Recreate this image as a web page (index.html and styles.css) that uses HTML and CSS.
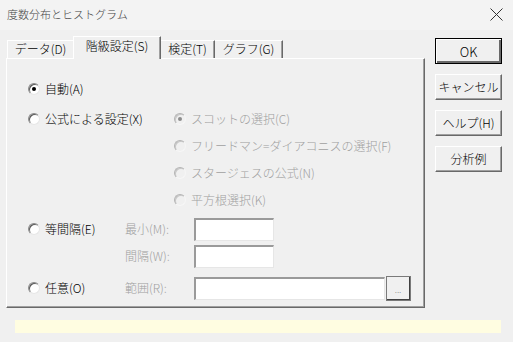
FILE: index.html
```html
<!DOCTYPE html>
<html lang="ja">
<head>
    <meta charset="UTF-8">
    <title>度数分布とヒストグラム</title>
    <link rel="stylesheet" href="styles.css">
</head>
<body>

    <div class="titlebar">
        <span class="title">度数分布とヒストグラム</span>
        <svg class="close" width="13" height="13" viewBox="0 0 13 13">
            <path d="M0.5 0.5 L12.5 12.5 M12.5 0.5 L0.5 12.5" stroke="#333" stroke-width="1" fill="none"/>
        </svg>
    </div>

    <div class="main">
        <div class="left">
            <div class="tabs">
                <div class="tab tab-data">データ(D)</div>
                <div class="tab tab-class active">階級設定(S)</div>
                <div class="tab tab-test">検定(T)</div>
                <div class="tab tab-graph">グラフ(G)</div>
            </div>

            <div class="panel">
                <div class="row">
                    <div class="opt"><span class="radio checked"></span>自動(A)</div>
                </div>

                <div class="formula">
                    <div class="opt wide"><span class="radio"></span>公式による設定(X)</div>
                    <div class="sublist">
                        <div class="subrow opt disabled"><span class="radio checked"></span>スコットの選択(C)</div>
                        <div class="subrow opt disabled"><span class="radio"></span>フリードマン=ダイアコニスの選択(F)</div>
                        <div class="subrow opt disabled"><span class="radio"></span>スタージェスの公式(N)</div>
                        <div class="subrow opt disabled"><span class="radio"></span>平方根選択(K)</div>
                    </div>
                </div>

                <div class="row row-equal">
                    <div class="opt narrow"><span class="radio"></span>等間隔(E)</div>
                    <span class="field-label">最小(M):</span>
                    <div class="textbox small"></div>
                </div>

                <div class="row row-step">
                    <div class="opt narrow"></div>
                    <span class="field-label">間隔(W):</span>
                    <div class="textbox small"></div>
                </div>

                <div class="row row-any">
                    <div class="opt narrow"><span class="radio"></span>任意(O)</div>
                    <span class="field-label">範囲(R):</span>
                    <div class="textbox range"></div>
                    <button class="dots-btn">...</button>
                </div>
            </div>
        </div>

        <div class="buttons">
            <button class="btn default">OK</button>
            <button class="btn">キャンセル</button>
            <button class="btn">ヘルプ(H)</button>
            <button class="btn">分析例</button>
        </div>
    </div>

    <div class="status"></div>

</body>
</html>
```

FILE: styles.css
```css
* {
    box-sizing: border-box;
    margin: 0;
    padding: 0;
}

body {
    width: 513px;
    height: 342px;
    overflow: hidden;
    background-color: #f0f0f0;
    color: #000;
    font-family: "Noto Sans CJK JP Light", "Noto Sans CJK JP", sans-serif;
    font-size: 12px;
}

/* title bar */
.titlebar {
    display: flex;
    align-items: center;
    justify-content: space-between;
    height: 30px;
    padding: 0 10px 2px 7px;
    background-color: #f3f3f3;
}

.title {
    font-size: 11px;
    color: #444;
    line-height: 1;
}

/* main area */
.main {
    display: flex;
    margin-top: 6px;
    padding-left: 6px;
}

.left {
    width: 419px;
}

/* tabs */
.tabs {
    display: flex;
    align-items: flex-end;
    height: 22px;
    padding-left: 1px;
    position: relative;
    z-index: 1;
}

.tab {
    display: flex;
    align-items: center;
    justify-content: center;
    height: 18px;
    padding-bottom: 1px;
    border-top: 1px solid #fff;
    border-right: 1px solid #696969;
    box-shadow: inset -1px 0 #a0a0a0;
    line-height: 1;
    white-space: nowrap;
}

.tab-data {
    width: 66px;
    border-left: 1px solid #fff;
    border-right: none;
    box-shadow: none;
}

.tab-class {
    width: 88px;
}

.tab-test {
    width: 54px;
}

.tab-graph {
    width: 68px;
}

.tab.active {
    height: 23px;
    margin-bottom: -1px;
    padding-bottom: 5px;
    border-left: 1px solid #fff;
    background-color: #f0f0f0;
}

/* panel */
.panel {
    height: 250px;
    padding: 17px 0 0 21px;
    border-top: 1px solid #fff;
    border-left: 1px solid #fff;
    border-right: 1px solid #696969;
    border-bottom: 1px solid #696969;
    box-shadow: inset -1px -1px #a0a0a0;
}

.row {
    display: flex;
    align-items: center;
    height: 26px;
}

.opt {
    display: flex;
    align-items: center;
    white-space: nowrap;
    line-height: 1;
}

.opt.disabled {
    color: #a0a0a0;
}

.opt.narrow {
    width: 97px;
    height: 26px;
}

.formula {
    display: flex;
    margin-top: 3px;
}

.opt.wide {
    width: 146px;
    height: 27px;
}

.subrow {
    height: 27px;
}

.row-equal {
    margin-top: 3px;
}

.row-step {
    margin-top: 1px;
}

.row-any {
    margin-top: 6px;
}

/* radio buttons */
.radio {
    position: relative;
    flex: none;
    width: 12px;
    height: 12px;
    margin-right: 5px;
    border-radius: 50%;
    border: 1px solid;
    border-color: #8a8a8a #e6e6e6 #e6e6e6 #8a8a8a;
    background-color: #fff;
    box-shadow: inset 1px 1px 0 #5a5a5a;
}

.disabled .radio {
    border-color: #b4b4b4 #f6f6f6 #f6f6f6 #b4b4b4;
    background-color: #f0f0f0;
    box-shadow: inset 1px 1px 0 #c8c8c8;
}

.radio.checked::after {
    content: "";
    position: absolute;
    left: 3px;
    top: 3px;
    width: 4px;
    height: 4px;
    border-radius: 50%;
    background-color: #000;
}

.disabled .radio.checked::after {
    background-color: #8c8c8c;
}

/* fields */
.field-label {
    width: 69px;
    color: #a0a0a0;
    line-height: 1;
    white-space: nowrap;
}

.textbox {
    height: 23px;
    background-color: #fff;
    border-top: 2px solid #9a9a9a;
    border-left: 2px solid #9a9a9a;
    border-right: 1px solid #e6e6e6;
    border-bottom: 1px solid #e6e6e6;
}

.textbox.small {
    width: 80px;
}

.textbox.range {
    width: 191px;
}

.dots-btn {
    width: 25px;
    height: 25px;
    margin-left: 1px;
    padding-bottom: 4px;
    display: flex;
    align-items: flex-end;
    justify-content: center;
    background-color: #f0f0f0;
    border-top: 1px solid #fff;
    border-left: 1px solid #fff;
    border-right: 2px solid #404040;
    border-bottom: 2px solid #404040;
    outline: 1px solid #7a7a7a;
    outline-offset: -1px;
    font-family: "Liberation Sans", sans-serif;
    font-size: 8px;
    color: #777;
    line-height: 1;
}

/* right side buttons */
.buttons {
    display: flex;
    flex-direction: column;
    gap: 10px;
    margin-top: 2px;
    margin-left: 10px;
}

.btn {
    width: 67px;
    height: 26px;
    background-color: #f0f0f0;
    border-top: 1px solid #fff;
    border-left: 1px solid #fff;
    border-right: 1px solid #696969;
    border-bottom: 1px solid #696969;
    box-shadow: inset -1px -1px #a0a0a0;
    font-family: "Noto Sans CJK JP Light", "Noto Sans CJK JP", sans-serif;
    font-size: 12px;
    color: #000;
    line-height: 1;
}

.btn.default {
    border: 1px solid #000;
    box-shadow: inset 1px 1px #fff, inset -2px -2px #696969;
    font-size: 13px;
}

/* status bar */
.status {
    width: 486px;
    height: 13px;
    margin: 12px 0 0 15px;
    background-color: #fffde1;
}
```
